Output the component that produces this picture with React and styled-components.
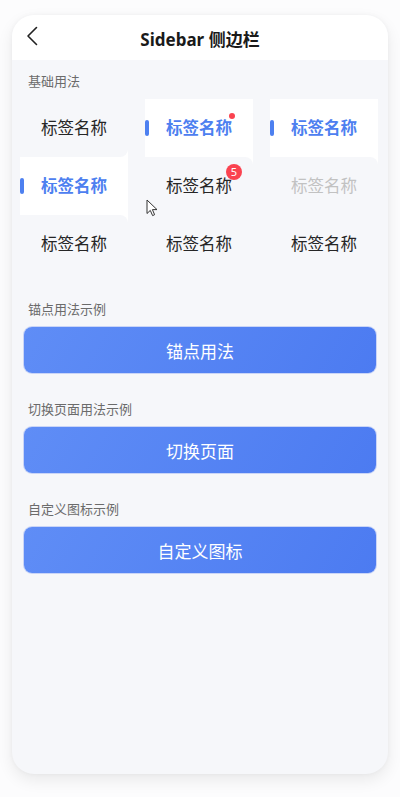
import React from 'react';
import styled, { createGlobalStyle } from 'styled-components';

const GlobalStyle = createGlobalStyle`
  html, body {
    margin: 0;
    padding: 0;
    min-height: 100%;
    background: #fcfcfd;
    font-family: "Noto Sans", "Noto Sans CJK SC", sans-serif;
  }
`;

const columns = [
  { active: 1, items: [{}, {}, {}] },
  { active: 0, items: [{ dot: true }, { badge: 5 }, {}] },
  { active: 0, items: [{}, { disabled: true }, {}] },
];

const buttons = [
  { title: '锚点用法示例', label: '锚点用法' },
  { title: '切换页面用法示例', label: '切换页面' },
  { title: '自定义图标示例', label: '自定义图标' },
];

class App extends React.Component {
  render() {
    return (
      <Page>
        <GlobalStyle />
        <Phone>
          <Header>
            <Back>
              <svg width="12" height="20" viewBox="0 0 12 20" fill="none">
                <path d="M10.5 1.5L2 10l8.5 8.5" stroke="#222" strokeWidth="1.6" strokeLinecap="round" strokeLinejoin="round" />
              </svg>
            </Back>
            <Title>Sidebar 侧边栏</Title>
            <span />
          </Header>

          <SectionTitle first>基础用法</SectionTitle>
          <Grid>
            {columns.map((col, ci) => (
              <Sidebar key={ci}>
                {col.items.map((item, i) => (
                  <Item
                    key={i}
                    $active={i === col.active}
                    $prefix={i === col.active - 1}
                    $suffix={i === col.active + 1}
                    $disabled={item.disabled}
                  >
                    {i === col.active && <Bar />}
                    <Label>
                      标签名称
                      {item.dot && <Dot />}
                      {item.badge && <Badge>{item.badge}</Badge>}
                    </Label>
                  </Item>
                ))}
              </Sidebar>
            ))}
          </Grid>

          {buttons.map((b) => (
            <React.Fragment key={b.title}>
              <SectionTitle>{b.title}</SectionTitle>
              <Button>{b.label}</Button>
            </React.Fragment>
          ))}

          <Cursor>
            <svg width="12" height="18" viewBox="0 0 12 18">
              <path d="M1 1v13.5l3.3-3.1 2.3 5.2 2-0.9-2.2-5.1h4.6z" fill="#fff" stroke="#333" strokeWidth="1" strokeLinejoin="round" />
            </svg>
          </Cursor>
        </Phone>
      </Page>
    );
  }
}

const Page = styled.div`
  padding: 15px 12px 23px;
  background: #fcfcfd;
`;

const Phone = styled.div`
  position: relative;
  display: flex;
  flex-direction: column;
  height: 759px;
  border-radius: 22px;
  background: #f6f7fa;
  overflow: hidden;
  box-shadow: 0 6px 16px rgba(0, 0, 0, 0.08), 0 0 5px rgba(0, 0, 0, 0.04);
`;

const Header = styled.div`
  flex: none;
  height: 45px;
  background: #fff;
  display: grid;
  grid-template-columns: 48px 1fr 48px;
  align-items: center;
`;

const Back = styled.div`
  display: flex;
  padding: 0 0 4px 14px;
`;

const Title = styled.div`
  text-align: center;
  font-size: 17px;
  font-weight: 700;
  color: #1a1a1a;
  margin-top: 1px;
`;

const SectionTitle = styled.div`
  padding: ${(p) => (p.first ? '12px' : '27px')} 16px 9px;
  font-size: 13px;
  line-height: 18px;
  color: #6b6b6b;
`;

const Grid = styled.div`
  display: grid;
  grid-template-columns: repeat(3, 108px);
  column-gap: 17px;
  padding: 0 8px;
`;

const Sidebar = styled.div`
  display: flex;
  flex-direction: column;
  background: #fff;
`;

const Item = styled.div`
  position: relative;
  height: 58px;
  display: flex;
  align-items: center;
  justify-content: center;
  background: ${(p) => (p.$active ? '#fff' : '#f6f7fa')};
  border-bottom-right-radius: ${(p) => (p.$prefix ? '8px' : '0')};
  border-top-right-radius: ${(p) => (p.$suffix ? '8px' : '0')};
  font-size: 16.5px;
  font-weight: ${(p) => (p.$active ? 700 : 400)};
  color: ${(p) => (p.$active ? '#4d80f0' : p.$disabled ? '#c2c2c2' : '#262626')};
`;

const Bar = styled.span`
  position: absolute;
  left: 0;
  top: 50%;
  width: 4px;
  height: 16px;
  margin-top: -8px;
  border-radius: 2px;
  background: #4d80f0;
`;

const Label = styled.span`
  position: relative;
  line-height: 22px;
`;

const Dot = styled.span`
  position: absolute;
  right: -3px;
  top: -4px;
  width: 6px;
  height: 6px;
  border-radius: 50%;
  background: #fa4350;
`;

const Badge = styled.span`
  position: absolute;
  right: -10px;
  top: -11px;
  min-width: 16px;
  height: 16px;
  border-radius: 8px;
  background: #fa4350;
  color: #fff;
  font-size: 11px;
  font-weight: 400;
  line-height: 16px;
  text-align: center;
`;

const Button = styled.div`
  flex: none;
  margin: 0 12px;
  height: 46px;
  border-radius: 8px;
  background: linear-gradient(120deg, #5f8df6 0%, #4c7bf1 100%);
  box-shadow: 0 0 0 1px rgba(120, 150, 240, 0.35);
  color: #fff;
  font-size: 17px;
  display: flex;
  align-items: center;
  justify-content: center;
`;

const Cursor = styled.div`
  position: absolute;
  left: 134px;
  top: 184px;
  display: flex;
`;

export default App;
